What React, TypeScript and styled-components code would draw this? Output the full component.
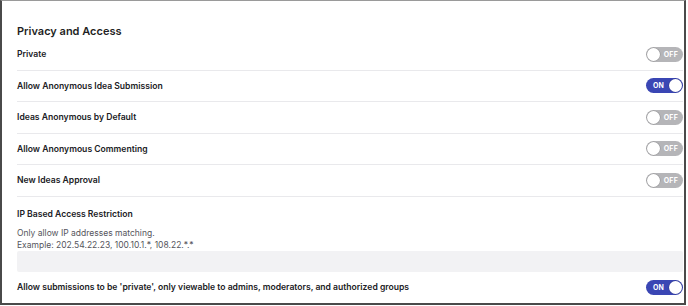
import React from "react";
import styled, { createGlobalStyle } from "styled-components";

const Global = createGlobalStyle`
  html, body { margin: 0; padding: 0; background: #ffffff; }
  body { font-family: Inter, "Noto Sans", sans-serif; color: #222226; -webkit-font-smoothing: antialiased; }
`;

const Frame = styled.div`
  box-sizing: border-box;
  width: 686px;
  height: 305px;
  border-top: 1px solid #9a9a9a;
  border-left: 2px solid #4a4a4a;
  border-right: 2px solid #4a4a4a;
  border-bottom: 2px solid #4a4a4a;
  padding: 22px 1px 0 15px;
  display: flex;
  flex-direction: column;
`;

const Heading = styled.h2`
  margin: 0;
  font-size: 11px;
  line-height: 16px;
  font-weight: 600;
  color: #1f1f24;
`;

const Row = styled.div<{ $divider?: boolean }>`
  box-sizing: border-box;
  height: 32px;
  display: flex;
  align-items: center;
  justify-content: space-between;
  border-bottom: ${(p) => (p.$divider ? "1px solid #e9e9ec" : "none")};
`;

const Label = styled.span`
  font-size: 8.6px;
  font-weight: 600;
  color: #202024;
`;

const Section = styled.div`
  display: flex;
  flex-direction: column;
  padding-top: 10px;
`;

const SectionTitle = styled.span`
  font-size: 8.6px;
  font-weight: 600;
  line-height: 14px;
  color: #202024;
`;

const Description = styled.p`
  margin: 6px 0 0;
  font-size: 8.5px;
  line-height: 12px;
  color: #55555c;
`;

const Input = styled.input`
  box-sizing: border-box;
  height: 21px;
  width: 100%;
  border: none;
  border-radius: 2px;
  background: #f2f2f4;
  outline: none;
`;

const Track = styled.button<{ $on: boolean }>`
  position: relative;
  box-sizing: border-box;
  width: 37px;
  height: 15px;
  border: none;
  border-radius: 8px;
  padding: 0;
  background: ${(p) => (p.$on ? "#3a46b4" : "#b5b5b8")};
  display: flex;
  align-items: center;
  justify-content: ${(p) => (p.$on ? "flex-start" : "flex-end")};
  cursor: pointer;
`;

const ToggleText = styled.span<{ $on: boolean }>`
  font-family: Inter, "Noto Sans", sans-serif;
  font-size: 7px;
  font-weight: 700;
  color: #ffffff;
  letter-spacing: 0.2px;
  padding: ${(p) => (p.$on ? "0 0 0 7px" : "0 5px 0 0")};
`;

const Knob = styled.span<{ $on: boolean }>`
  position: absolute;
  top: 1px;
  ${(p) => (p.$on ? "right: 1px;" : "left: 1px;")}
  width: 13px;
  height: 13px;
  border-radius: 50%;
  background: #ffffff;
  box-shadow: 0 0 0 0.5px rgba(0, 0, 0, 0.18);
`;

const Toggle = ({ on }: { on: boolean }) => (
  <Track $on={on} aria-pressed={on}>
    <ToggleText $on={on}>{on ? "ON" : "OFF"}</ToggleText>
    <Knob $on={on} />
  </Track>
);

const settings = [
  { label: "Private", on: false },
  { label: "Allow Anonymous Idea Submission", on: true },
  { label: "Ideas Anonymous by Default", on: false },
  { label: "Allow Anonymous Commenting", on: false },
  { label: "New Ideas Approval", on: false },
];

export default function App() {
  return (
    <>
      <Global />
      <Frame>
        <Heading>Privacy and Access</Heading>
        {settings.map((s) => (
          <Row key={s.label} $divider>
            <Label>{s.label}</Label>
            <Toggle on={s.on} />
          </Row>
        ))}
        <Section>
          <SectionTitle>IP Based Access Restriction</SectionTitle>
          <Description>
            Only allow IP addresses matching.
            <br />
            Example: 202.54.22.23, 100.10.1.*, 108.22.*.*
          </Description>
          <Input />
        </Section>
        <Row>
          <Label>
            Allow submissions to be 'private', only viewable to admins, moderators, and authorized groups
          </Label>
          <Toggle on />
        </Row>
      </Frame>
    </>
  );
}
